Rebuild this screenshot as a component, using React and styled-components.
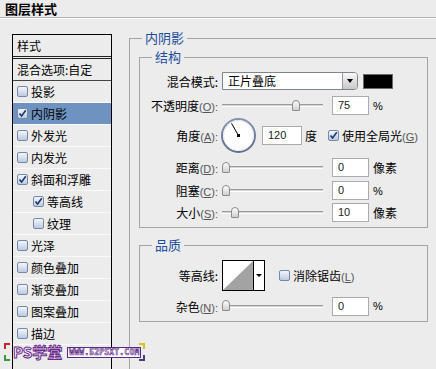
import React from 'react'
import styled, { createGlobalStyle } from 'styled-components'

const GlobalStyle = createGlobalStyle`
  html, body { margin: 0; padding: 0; }
  body {
    width: 436px;
    height: 369px;
    overflow: hidden;
    background: #ececec;
    font-family: "Noto Sans CJK SC", "DejaVu Sans", sans-serif;
    font-size: 12px;
    color: #000;
  }
`

const Dialog = styled.div`
  position: relative;
  width: 436px;
  height: 369px;
  display: flex;
  flex-direction: column;
  overflow: hidden;
  background: #ececec;
`

const TitleBar = styled.div`
  height: 16px;
  flex-shrink: 0;
  padding: 1px 0 0 5px;
  border-bottom: 1px solid #b0b0b0;
  box-shadow: 0 1px 0 #fff;
  font-size: 13px;
  font-weight: bold;
  line-height: 16px;
`

const Body = styled.div`
  flex: 1;
  min-height: 0;
  display: flex;
  align-items: stretch;
`

/* ---------- left style list ---------- */

const StyleList = styled.div`
  width: 100px;
  box-sizing: border-box;
  margin: 16px 0 0 12px;
  border: 1px solid #000;
  border-bottom: none;
  display: flex;
  flex-direction: column;
  flex-shrink: 0;
`

const ListHeader = styled.div`
  height: 21px;
  padding-left: 4px;
  line-height: 21px;
  border-bottom: 3px double #222;
`

const BlendItem = styled.div`
  height: 21px;
  padding-left: 4px;
  line-height: 21px;
  border-bottom: 1px solid #444;
`

const StyleItem = styled.div`
  height: 21px;
  display: flex;
  align-items: center;
  gap: 3px;
  padding-left: ${p => (p.$sub ? 20 : 4)}px;
  border-bottom: 1px solid #fafafa;
  background: ${p => (p.$active ? '#6f93c0' : 'transparent')};
  white-space: nowrap;
`

const Box = styled.span`
  width: 11px;
  height: 11px;
  box-sizing: border-box;
  flex-shrink: 0;
  border: 1px solid #7588a8;
  border-radius: 2px;
  background: linear-gradient(#f2f6fb, #bccbe0);
  display: inline-flex;
  align-items: center;
  justify-content: center;
  margin-left: ${p => p.$ml || 0}px;
`

function Check ({ checked, ml }) {
  return (
    <Box $ml={ml}>
      {checked && (
        <svg width='9' height='9' viewBox='0 0 9 9'>
          <path d='M1.5 4.5 L3.6 7 L7.8 1.2' fill='none' stroke='#1d3768' strokeWidth='1.6' />
        </svg>
      )}
    </Box>
  )
}

/* ---------- right settings ---------- */

const RightArea = styled.div`
  flex: 1;
  display: flex;
  flex-direction: column;
  margin: 13px -30px -30px 17px;
`

const OuterGroup = styled.fieldset`
  flex: 1;
  margin: 0;
  padding: 5px 0 0 9px;
  border: 1px solid #a4a4a4;
  min-width: 0;
`

const Legend = styled.legend`
  margin-left: ${p => p.$ml || 0}px;
  padding: 0 3px;
  font-size: 13px;
  line-height: 14px;
  color: #1c4d9b;
`

const Section = styled.fieldset`
  width: 289px;
  box-sizing: border-box;
  margin: ${p => p.$mt || 0}px 0 0 0;
  padding: 8px 0 ${p => p.$pb || 5}px 0;
  border: 1px solid #a4a4a4;
  min-width: 0;
`

const FieldRow = styled.div`
  display: flex;
  align-items: center;
  height: ${p => p.$h}px;
  margin-top: ${p => p.$mt || 0}px;
  white-space: nowrap;
`

const Label = styled.span`
  width: 78px;
  margin-right: 4px;
  flex-shrink: 0;
  text-align: right;
`

const Key = styled.span`
  font-family: "Liberation Sans", Arial, sans-serif;
  font-size: 11px;
  color: #555;
  u { text-decoration: underline; }
`

const Select = styled.div`
  width: 136px;
  height: 18px;
  box-sizing: border-box;
  display: flex;
  border: 1px solid #7f858f;
  border-radius: 0 4px 4px 0;
  background: #fff;
`

const SelectText = styled.span`
  flex: 1;
  padding-left: 5px;
  line-height: 16px;
`

const SelectButton = styled.span`
  width: 14px;
  display: flex;
  align-items: center;
  justify-content: center;
  border-left: 1px solid #9a9a9a;
  border-radius: 0 3px 3px 0;
  background: linear-gradient(#f8f8f8, #c8c8c8);
  &::after {
    content: '';
    border-left: 3px solid transparent;
    border-right: 3px solid transparent;
    border-top: 4px solid #000;
  }
`

const Swatch = styled.span`
  width: 30px;
  height: 15px;
  box-sizing: border-box;
  margin-left: 5px;
  background: #000;
  border: 1px solid #6a6a6a;
`

const Slider = styled.div`
  position: relative;
  width: 101px;
  height: 12px;
  margin-right: 9px;
  flex-shrink: 0;
  display: flex;
  align-items: center;
`

const Track = styled.div`
  width: 100%;
  height: 1px;
  border-top: 1px solid #9b9b9b;
  border-bottom: 1px solid #fff;
  background: #d4d4d4;
`

const Thumb = styled.span`
  position: absolute;
  top: 0;
  left: ${p => p.$pos}px;
  width: 8px;
  height: 11px;
  box-sizing: border-box;
  border: 1px solid #8c8c8c;
  border-radius: 4px 4px 1px 1px;
  background: linear-gradient(#fdfdfd, #d0d0d0);
`

const NumBox = styled.span`
  width: ${p => p.$w || 37}px;
  height: 19px;
  box-sizing: border-box;
  padding-left: 5px;
  border: 1px solid #a9abb0;
  background: #fff;
  font-family: "Liberation Sans", Arial, sans-serif;
  font-size: 11px;
  line-height: 17px;
  color: #222;
  margin-left: ${p => p.$ml || 0}px;
  flex-shrink: 0;
`

const Unit = styled.span`
  margin-left: ${p => p.$ml || 4}px;
  font-size: ${p => (p.$latin ? 11 : 12)}px;
  font-family: ${p => (p.$latin ? '"Liberation Sans", Arial, sans-serif' : 'inherit')};
`

const Dial = styled.svg`
  margin-left: -2px;
  flex-shrink: 0;
`

const ContourBox = styled.div`
  display: flex;
  height: 31px;
  box-sizing: border-box;
  border: 1px solid #000;
  background: #fff;
`

const ContourArrow = styled.span`
  width: 10px;
  display: flex;
  align-items: center;
  justify-content: center;
  border-left: 1px solid #000;
  &::after {
    content: '';
    border-left: 3px solid transparent;
    border-right: 3px solid transparent;
    border-top: 3px solid #000;
  }
`

/* ---------- watermark overlay ---------- */

const Watermark = styled.div`
  position: absolute;
  left: 4px;
  top: 343px;
  width: 141px;
  height: 18px;
  display: flex;
  align-items: center;
  gap: 5px;
  padding-left: 9px;
  box-sizing: border-box;
`

const Corner = styled.span`
  position: absolute;
  width: 4px;
  height: 4px;
  border: 0 solid ${p => p.$c};
  ${p => p.$pos}
`

const WmBig = styled.span`
  font-family: "Noto Sans CJK SC", sans-serif;
  font-size: 15px;
  font-weight: bold;
  line-height: 16px;
  color: #fff;
  -webkit-text-stroke: 1px #6a2a8c;
`

const WmSmall = styled.span`
  font-family: "DejaVu Sans Mono", monospace;
  font-size: 8px;
  font-weight: bold;
  letter-spacing: 0.2px;
  line-height: 9px;
  padding: 0 1px;
  color: #fff;
  background: #fff;
  -webkit-text-stroke: 0.6px #5b2a86;
  border: 1px solid #5b2a86;
`

const styleItems = [
  { name: '投影' },
  { name: '内阴影', checked: true, active: true },
  { name: '外发光' },
  { name: '内发光' },
  { name: '斜面和浮雕', checked: true },
  { name: '等高线', checked: true, sub: true },
  { name: '纹理', sub: true },
  { name: '光泽' },
  { name: '颜色叠加' },
  { name: '渐变叠加' },
  { name: '图案叠加' },
  { name: '描边' }
]

// slider usable span is the track width minus the thumb
const thumbPos = (frac) => Math.round(frac * 93)

const KeyLabel = ({ text, k }) => (
  <Label>{text}<Key>(<u>{k}</u>):</Key></Label>
)

function SliderRow ({ label, k, frac, value, unit, latin, h = 19, mt = 0 }) {
  return (
    <FieldRow $h={h} $mt={mt}>
      <KeyLabel text={label} k={k} />
      <Slider>
        <Track />
        <Thumb $pos={thumbPos(frac)} />
      </Slider>
      <NumBox>{value}</NumBox>
      <Unit $latin={latin}>{unit}</Unit>
    </FieldRow>
  )
}

export default function App () {
  // angle dial: 120 degrees, line from centre towards upper-left
  const a = (120 * Math.PI) / 180
  const cx = 18.5
  const cy = 18.5
  const ex = cx + Math.cos(a) * 14
  const ey = cy - Math.sin(a) * 14

  return (
    <Dialog>
      <GlobalStyle />
      <TitleBar>图层样式</TitleBar>
      <Body>
        <StyleList>
          <ListHeader>样式</ListHeader>
          <BlendItem>混合选项:自定</BlendItem>
          {styleItems.map(item => (
            <StyleItem key={item.name} $sub={item.sub} $active={item.active}>
              <Check checked={item.checked} />
              {item.name}
            </StyleItem>
          ))}
        </StyleList>

        <RightArea>
          <OuterGroup>
            <Legend $ml={3}>内阴影</Legend>

            <Section>
              <Legend $ml={12}>结构</Legend>
              <FieldRow $h={18}>
                <Label>混合模式:</Label>
                <Select>
                  <SelectText>正片叠底</SelectText>
                  <SelectButton />
                </Select>
                <Swatch />
              </FieldRow>

              <SliderRow label='不透明度' k='O' frac={0.75} value='75' unit='%' latin mt={6} />

              <FieldRow $h={36} $mt={2}>
                <KeyLabel text='角度' k='A' />
                <Dial width='37' height='37' viewBox='0 0 37 37'>
                  <defs>
                    <linearGradient id='ring' x1='0' y1='0' x2='0' y2='1'>
                      <stop offset='0' stopColor='#8593ad' />
                      <stop offset='1' stopColor='#5d6d8c' />
                    </linearGradient>
                  </defs>
                  <circle cx={cx} cy={cy} r='16.5' fill='#fff' stroke='url(#ring)' strokeWidth='2' />
                  <circle cx={cx} cy={cy} r='15' fill='none' stroke='#e4e8ef' strokeWidth='1' />
                  <line x1={cx} y1={cy} x2={ex} y2={ey} stroke='#000' strokeWidth='1' />
                  <rect x={cx - 1.5} y={cy - 1.5} width='3' height='3' fill='#000' />
                </Dial>
                <NumBox $w={40} $ml={5}>120</NumBox>
                <Unit $ml={3}>度</Unit>
                <Check checked ml={11} />
                <Unit $ml={3}>使用全局光<Key>(<u>G</u>)</Key></Unit>
              </FieldRow>

              <SliderRow label='距离' k='D' frac={0} value='0' unit='像素' mt={5} />
              <SliderRow label='阻塞' k='C' frac={0} value='0' unit='%' latin mt={4} />
              <SliderRow label='大小' k='S' frac={0.1} value='10' unit='像素' mt={3} />
            </Section>

            <Section $mt={10} $pb={6}>
              <Legend $ml={12}>品质</Legend>
              <FieldRow $h={31}>
                <Label>等高线:</Label>
                <ContourBox>
                  <svg width='30' height='29' viewBox='0 0 30 29'>
                    <polygon points='0,29 30,0 30,29' fill='#a3a3a3' />
                  </svg>
                  <ContourArrow />
                </ContourBox>
                <Check ml={14} />
                <Unit $ml={3}>消除锯齿<Key>(<u>L</u>)</Key></Unit>
              </FieldRow>
              <SliderRow label='杂色' k='N' frac={0} value='0' unit='%' latin h={18} mt={6} />
            </Section>
          </OuterGroup>
        </RightArea>
      </Body>

      <Watermark>
        <Corner $c='#c0282c' $pos='left: 0; top: 0; border-top-width: 2px; border-left-width: 2px;' />
        <Corner $c='#3a9a3a' $pos='left: 0; bottom: 0; border-bottom-width: 2px; border-left-width: 2px;' />
        <Corner $c='#d8c21c' $pos='right: 0; top: 0; border-top-width: 2px; border-right-width: 2px;' />
        <Corner $c='#4a3a7a' $pos='right: 0; bottom: 0; border-bottom-width: 2px; border-right-width: 2px;' />
        <WmBig>PS学堂</WmBig>
        <WmSmall>WWW.52PSXT.COM</WmSmall>
      </Watermark>
    </Dialog>
  )
}
